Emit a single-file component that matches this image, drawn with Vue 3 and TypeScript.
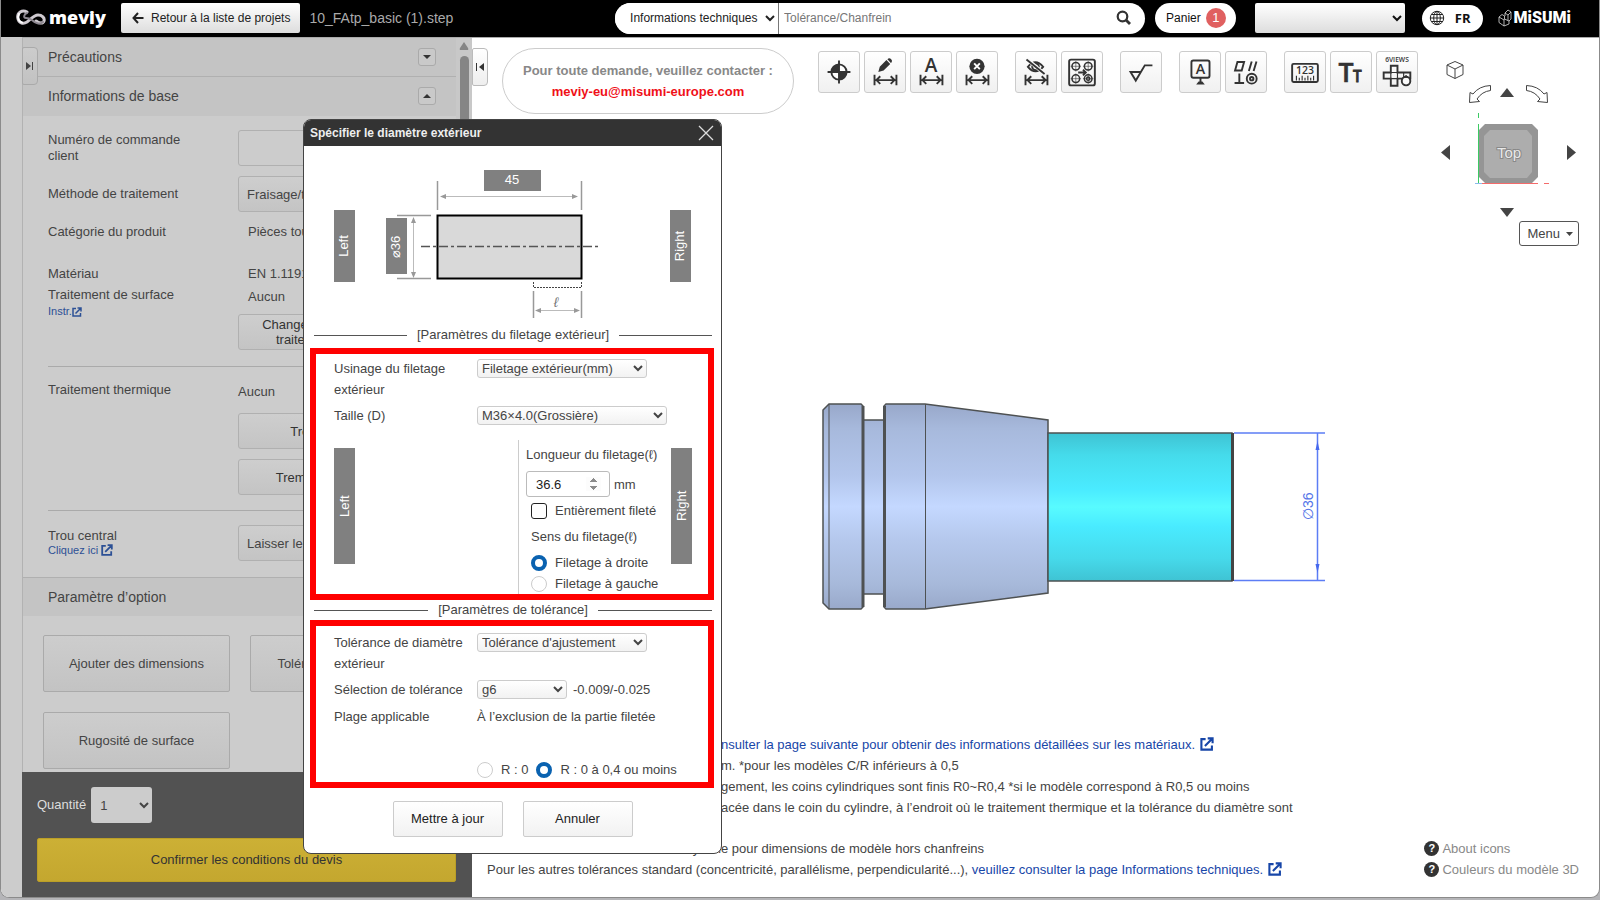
<script setup lang="ts">
import { ref } from 'vue'

const search = ref('')
const threadKind = ref('Filetage extérieur(mm)')
const threadSize = ref('M36×4.0(Grossière)')
const threadLength = ref(36.6)
const fullyThreaded = ref(false)
const direction = ref('right')
const toleranceKind = ref("Tolérance d'ajustement")
const toleranceClass = ref('g6')
const cornerRadius = ref('r04')
const quantity = ref(1)
const options: string[] = ['Ajouter des dimensions', 'Tolérance géométrique', 'Rugosité de surface']
</script>

<template>
  <div class="app">
    <header class="topbar">
      <a class="brand" href="#" aria-label="meviy">
        <svg width="30" height="18" viewBox="0 0 30 18" fill="none" stroke-linecap="round">
          <path d="M11 3C6 0 1 4 1.800 9C2.500 14 7 15.500 11 13C15 10 18 6 22 6C26 6 29 9 28 12C27 15 23 14.500 20 12" stroke="#cfcad0" stroke-width="3" />
          <path d="M11 4C8 5 7 9 10 9C12 9 13 9 16 11C19 14 24 16 27 13" stroke="#8d8790" stroke-width="2" />
          <path d="M3 5C1 9 3 13 6 13.500" stroke="#fff" stroke-width="2" />
        </svg>
        <span>meviy</span>
      </a>
      <button class="back" type="button">
        <svg width="12" height="12" viewBox="0 0 12 12" fill="none" stroke="#222" stroke-width="2"><path d="M6 1L1.500 6L6 11M1.500 6H11.500" /></svg>
        Retour à la liste de projets
      </button>
      <span class="filename">10_FAtp_basic (1).step</span>
      <form class="search" @submit.prevent>
        <select aria-label="Domaine"><option>Informations techniques</option></select>
        <input v-model="search" type="text" aria-label="Recherche" placeholder="Tolérance/Chanfrein" />
        <button type="submit" aria-label="Rechercher">
          <svg width="16" height="16" viewBox="0 0 16 16" fill="none" stroke="#333"><circle cx="6.500" cy="6.500" r="4.800" stroke-width="2.200" /><path d="M10 10L14 14" stroke-width="2.800" /></svg>
        </button>
      </form>
      <button class="cart" type="button">Panier <b>1</b></button>
      <select class="account" aria-label="Compte"><option></option></select>
      <button class="lang" type="button">
        <svg width="16" height="16" viewBox="0 0 16 16" fill="none" stroke="#222"><circle cx="8" cy="8" r="6.700" /><ellipse cx="8" cy="8" rx="3.300" ry="6.700" /><path d="M8 1V15M1 8H15M2.500 4.500H13.500M2.500 11.500H13.500" /></svg>
        FR
      </button>
      <a class="misumi" href="#">
        <svg width="14" height="18" viewBox="0 0 14 18" fill="none" stroke="#ddd" stroke-width=".8"><path d="M1 8L4 5.500L6.500 7V10L11 12V15L6 17L1 13.500ZM1 8L6 11L6.500 10M6 11V17M7 4L10 1L13 3V10L11 12M7 4L10 6L13 3M10 6V11.500M7 4V7" /></svg>
        <span>MiSUMi</span>
      </a>
    </header>

    <main class="workspace">
      <aside class="sidebar">
        <div class="scroller">
          <button class="tab" type="button" aria-label="Déplier le panneau">
            <svg width="8" height="10" viewBox="0 0 8 10"><path d="M0 1L5 5L0 9ZM6 1H7V9H6Z" fill="#444" /></svg>
          </button>
          <div class="content">
            <h2 class="section">Précautions
              <button type="button" aria-label="Ouvrir"><svg width="8" height="4" viewBox="0 0 8 4"><path d="M0 0H8L4 4Z" fill="#333" /></svg></button>
            </h2>
            <h2 class="section base">Informations de base
              <button type="button" aria-label="Fermer"><svg width="8" height="4" viewBox="0 0 8 4"><path d="M0 4H8L4 0Z" fill="#333" /></svg></button>
            </h2>
            <div class="fields">
              <label class="field tall" for="order"><span>Numéro de commande client</span><input id="order" class="control" type="text" /></label>
              <label class="field tall"><span>Méthode de traitement</span><select class="control"><option>Fraisage/tournage</option></select></label>
              <div class="field"><span>Catégorie du produit</span><span class="value">Pièces tournées</span></div>
              <div class="field material"><span>Matériau</span><span class="value">EN 1.1191 (C45E)</span></div>
              <div class="field surface">
                <span>Traitement de surface<br />
                  <a href="#">Instr.<svg class="ext" width="10" height="10" viewBox="0 0 10 10"><path d="M4 1.500H1V9H8.500V6M3.500 6.500L8.500 1.500M5.500 1H9V4.500" /></svg></a>
                </span>
                <span><span class="value">Aucun</span><button class="control" type="button">Changer le matériau ou le<br />traitement de surface</button></span>
              </div>
            </div>
            <div class="fields ruled thermal">
              <div class="field"><span>Traitement thermique</span>
                <span class="stack"><span>Aucun</span><button class="control" type="button">Trempe partielle</button><button class="control" type="button">Trempe par induction</button></span>
              </div>
            </div>
            <div class="fields ruled center-hole">
              <label class="field"><span>Trou central<br /><a href="#">Cliquez ici <svg class="ext" width="12" height="12" viewBox="0 0 10 10"><path d="M4 1.500H1V9H8.500V6M3.500 6.500L8.500 1.500M5.500 1H9V4.500" /></svg></a></span>
                <select class="control"><option>Laisser le centrage</option></select></label>
            </div>
            <h2 class="section option">Paramètre d’option</h2>
            <div class="options"><button v-for="o in options" :key="o" type="button">{{ o }}</button></div>
          </div>
          <div class="scrollbar">
            <svg width="10" height="8" viewBox="0 0 10 8"><path d="M5 0L9 6Q10 8 8 8H2Q0 8 1 6Z" fill="#858585" /></svg>
            <i></i>
          </div>
        </div>
        <div class="order">
          <label>Quantité <select v-model="quantity"><option :value="1">1</option><option :value="2">2</option></select></label>
          <button type="button">Confirmer les conditions du devis</button>
        </div>
      </aside>

      <section class="viewer">
        <div class="viewer-top">
          <button class="tab light" type="button" aria-label="Replier le panneau">
            <svg width="8" height="10" viewBox="0 0 8 10"><path d="M8 1L3 5L8 9ZM0 1H1V9H0Z" fill="#333" /></svg>
          </button>
          <p class="contact">Pour toute demande, veuillez contacter :<a href="#">meviy-eu@misumi-europe.com</a></p>
          <div class="toolbar">
            <div class="group">
              <button type="button" aria-label="Origine"><svg viewBox="0 0 42 42"><circle cx="21" cy="21" r="8" fill="#fff" stroke="#333" stroke-width="2" /><path d="M21 21H13A8 8 0 0 1 21 13ZM21 21H29A8 8 0 0 1 21 29Z" fill="#333" /><path d="M21 9V33M9 21H33" class="s" /></svg></button>
              <button type="button" aria-label="Modifier la cote"><svg viewBox="0 0 42 42"><path d="M14 21L15.500 15.500L22.500 8.500L26.500 12.500L19.500 19.500ZM23.500 7.500L24.500 6.700Q26 6 27.500 7.500T28 10.800L27.200 11.600Z" fill="#333" /><path class="s" d="M10 24V35M33 24V35M11 29.500H32M16 25.500L12 29.500L16 33.500M27 25.500L31 29.500L27 33.500" /></svg></button>
              <button type="button" aria-label="Texte de cote"><svg viewBox="0 0 42 42"><text x="21" y="21" font-size="20" text-anchor="middle">A</text><path class="s" d="M10 24V35M33 24V35M11 29.500H32M16 25.500L12 29.500L16 33.500M27 25.500L31 29.500L27 33.500" /></svg></button>
              <button type="button" aria-label="Supprimer la cote"><svg viewBox="0 0 42 42"><circle cx="21" cy="15" r="8" fill="#333" /><path d="M18 12L24 18M24 12L18 18" stroke="#fff" stroke-width="2" /><path class="s" d="M10 24V35M33 24V35M11 29.500H32M16 25.500L12 29.500L16 33.500M27 25.500L31 29.500L27 33.500" /></svg></button>
            </div>
            <div class="group">
              <button type="button" aria-label="Masquer les cotes"><svg viewBox="0 0 42 42"><path class="s" d="M12.500 15.500Q20.500 6 28.500 15.500Q20.500 25 12.500 15.500Z" /><circle cx="20.500" cy="15.500" r="3.500" class="s" /><path d="M12 8L30 23" stroke="#fafafa" stroke-width="4" /><path d="M11 8L30 23" class="s" /><path class="s" d="M10 24V35M33 24V35M11 29.500H32M16 25.500L12 29.500L16 33.500M27 25.500L31 29.500L27 33.500" /></svg></button>
              <button type="button" aria-label="Copier les trous"><svg viewBox="0 0 42 42"><rect x="7.500" y="8" width="27" height="27" rx="2" class="s" /><g class="ring"><circle cx="14.500" cy="15" r="4" /><circle cx="27.500" cy="15" r="4" /><circle cx="14.500" cy="28" r="4" /><circle cx="27.500" cy="28" r="4" /><circle cx="27.500" cy="28" r="1.700" /><path d="M9 15H20M14.500 9.500V20.500M22 15H33M27.500 9.500V20.500M9 28H20M14.500 22.500V33.500M22 28H33M27.500 22.500V33.500" stroke-width=".6" /></g><path d="M17 21.500H25M22 18.500L25 21.500L22 24.500" class="s" /></svg></button>
            </div>
            <div class="group"><button type="button" aria-label="Rugosité"><svg viewBox="0 0 42 42"><path class="s" d="M21 21H10L15.500 30L25 14H33" /></svg></button></div>
            <div class="group">
              <button type="button" aria-label="Référence"><svg viewBox="0 0 42 42"><rect x="12" y="9" width="19" height="18" rx="2" class="s" /><text x="21.500" y="23.500" font-size="15" text-anchor="middle">A</text><path d="M21.500 27V32" class="s" /><path d="M17 34L19.500 31H23.500L26 34Z" fill="#333" /></svg></button>
              <button type="button" aria-label="Tolérance géométrique"><svg viewBox="0 0 42 42"><path class="s" d="M9.500 19.500L12 10.500H19L16.500 19.500ZM24 20L27 10M29 20L32 10M9 32.500H19M14 22.500V32.500" /><circle cx="27" cy="28" r="5.200" class="s" /><circle cx="27" cy="28" r="1.800" class="s" /></svg></button>
            </div>
            <div class="group">
              <button type="button" aria-label="Mesurer"><svg viewBox="0 0 42 42"><rect x="7.500" y="12.500" width="27" height="19" rx="1.500" class="s" /><text x="21" y="23.500" font-size="11" font-weight="700" text-anchor="middle">123</text><path class="thin" d="M12 25V30M15 27V30M18 25V30M21 27V30M24 25V30M27 27V30M30 25V30" /></svg></button>
              <button type="button" aria-label="Taille du texte"><svg viewBox="0 0 42 42"><text x="8" y="31" font-size="28" stroke="#333" stroke-width=".6">T</text><text x="23" y="31" font-size="16" stroke="#333" stroke-width=".8">T</text></svg></button>
              <button type="button" aria-label="Six vues"><svg viewBox="0 0 42 42"><text x="21" y="11" font-size="7" font-weight="700" text-anchor="middle">6VIEWS</text><path class="s" d="M14.500 14.500H21.500V21.500H35V28H21.500V35.500H14.500V28H7V21.500H14.500Z" /><path class="thin" d="M14.500 21.500H21.500V28H14.500ZM28 21.500V28" /><circle cx="30.500" cy="30.500" r="4.500" fill="#fafafa" stroke="#333" stroke-width="2" /><path d="M28.500 26.500L30.500 24.500L32.500 26.500Z" fill="#333" stroke="#333" /></svg></button>
            </div>
          </div>
        </div>

        <div class="view-control">
          <button class="home" type="button" aria-label="Vue isométrique"><svg width="18" height="20" viewBox="0 0 18 20" fill="none" stroke="#444"><path d="M9 1.500L17 5V14.500L9 18.500L1 14.500V5ZM1 5L9 9L17 5M9 9V18.500" /></svg></button>
          <button class="turn-left" type="button" aria-label="Pivoter à gauche"><svg width="24" height="20" viewBox="0 0 24 20" fill="none" stroke="#444"><path d="M22.500 1.500Q11 2 5 10L2 8.500L1.500 18.500L11.500 17.500L9 15Q14 7.500 22.500 6.500Z" /></svg></button>
          <button class="up" type="button" aria-label="Haut"><svg width="14" height="9" viewBox="0 0 14 9"><path d="M0 9L7 0L14 9Z" /></svg></button>
          <button class="turn-right" type="button" aria-label="Pivoter à droite"><svg width="24" height="20" viewBox="0 0 24 20" fill="none" stroke="#444"><path d="M1.500 1.500Q13 2 19 10L22 8.500L22.500 18.500L12.500 17.500L15 15Q10 7.500 1.500 6.500Z" /></svg></button>
          <button class="west" type="button" aria-label="Gauche"><svg width="9" height="15" viewBox="0 0 9 15"><path d="M9 0L0 7.500L9 15Z" /></svg></button>
          <svg class="cube" width="76" height="74" viewBox="0 0 76 74">
            <path d="M4 18L10 12H57L63 18V65L57 71H10L4 65Z" fill="#959595" />
            <path d="M15 18H52L57 24V60L52 66H15L9 60V24Z" fill="#adadad" />
            <path d="M3.500 1V6M3.500 12V71" stroke="#3ccb63" />
            <path d="M7 71.500H63M69 71.500H74" stroke="#f46b6b" /><path d="M0 71.500H7" stroke="#8cbcec" />
            <text x="34" y="46" text-anchor="middle">Top</text>
          </svg>
          <button class="east" type="button" aria-label="Droite"><svg width="9" height="15" viewBox="0 0 9 15"><path d="M0 0L9 7.500L0 15Z" /></svg></button>
          <button class="down" type="button" aria-label="Bas"><svg width="14" height="9" viewBox="0 0 14 9"><path d="M0 0H14L7 9Z" /></svg></button>
          <button class="menu" type="button">Menu <svg width="7" height="4" viewBox="0 0 7 4"><path d="M0 0H7L3.500 4Z" /></svg></button>
        </div>

        <svg class="model" width="510" height="210" viewBox="820 402 510 210">
          <defs>
            <linearGradient id="steel" gradientUnits="userSpaceOnUse" x1="0" y1="404" x2="0" y2="609"><stop offset="0" stop-color="#98a8ca" /><stop offset=".12" stop-color="#a7b9dc" /><stop offset=".35" stop-color="#b3c6ec" /><stop offset=".5" stop-color="#c4d8ff" /><stop offset=".65" stop-color="#b6c9ee" /><stop offset=".88" stop-color="#a7b9da" /><stop offset="1" stop-color="#99a9ca" /></linearGradient>
            <linearGradient id="cyan" x1="0" y1="0" x2="0" y2="1"><stop offset="0" stop-color="#3fc3d3" /><stop offset=".15" stop-color="#45dbeb" /><stop offset=".38" stop-color="#4aebff" /><stop offset=".5" stop-color="#58fbff" /><stop offset=".63" stop-color="#49ebff" /><stop offset=".85" stop-color="#46d9ea" /><stop offset="1" stop-color="#3fc3d3" /></linearGradient>
          </defs>
          <g fill="url(#steel)" stroke="#4e5152" stroke-width="1.500">
            <path d="M823 410L829 404H861L863 406V607L861 609H829L823 603Z" />
            <path d="M863 420H884V594H863Z" />
            <path d="M886 404H925L1048 420V593L925 609H886L884 607V406Z" />
          </g>
          <path d="M863 406V607M884.500 406V607" stroke="#4e5152" stroke-width="3" />
          <path d="M829 404V609M925.500 404V609" stroke="#4e5152" />
          <rect x="1048" y="433" width="184" height="148" fill="url(#cyan)" stroke="#4e5152" stroke-width="1.500" />
          <path d="M1232.500 433V581" stroke="#444" stroke-width="3" />
          <path d="M1234 433H1325M1234 580.500H1325M1317.500 433V580" stroke="#5c7df5" stroke-width="1.500" />
          <path d="M1317.500 441L1319.500 450H1315.500ZM1317.500 573L1319.500 564H1315.500Z" fill="#4769ee" />
          <text transform="translate(1313 520) rotate(-90)" fill="#5575e8" font-size="14">∅36</text>
        </svg>

        <footer class="viewer-foot">
          <div class="notes">
            <p><a href="#"><span class="lead">Pour les nuances, veuillez co</span>nsulter la page suivante pour obtenir des informations détaillées sur les matériaux. <svg class="ext" width="14" height="14" viewBox="0 0 10 10"><path d="M4 1.500H1V9H8.500V6M3.500 6.500L8.500 1.500M5.500 1H9V4.500" /></svg></a></p>
            <p><span class="lead">Chanfrein des arêtes : 0,1 à 0,5 m</span>m. *pour les modèles C/R inférieurs à 0,5</p>
            <p><span class="lead">Pour les coins sans déga</span>gement, les coins cylindriques sont finis R0~R0,4 *si le modèle correspond à R0,5 ou moins</p>
            <p><span class="lead">Une gorge peut être pl</span>acée dans le coin du cylindre, à l’endroit où le traitement thermique et la tolérance du diamètre sont</p>
            <p class="tail">spécifiés.</p>
            <p><span class="lead">Tolérance ISO 2768 moyenn</span>e pour dimensions de modèle hors chanfreins</p>
            <p>Pour les autres tolérances standard (concentricité, parallélisme, perpendicularité...), <a href="#">veuillez consulter la page Informations techniques. <svg class="ext" width="14" height="14" viewBox="0 0 10 10"><path d="M4 1.500H1V9H8.500V6M3.500 6.500L8.500 1.500M5.500 1H9V4.500" /></svg></a></p>
          </div>
          <nav class="help"><a href="#"><b>?</b>About icons</a><a href="#"><b>?</b>Couleurs du modèle 3D</a></nav>
        </footer>
      </section>
    </main>

    <form class="dialog" role="dialog" aria-labelledby="dialog-title" @submit.prevent>
      <div class="dialog-head"><h1 id="dialog-title">Spécifier le diamètre extérieur</h1>
        <button type="button" aria-label="Fermer"><svg width="16" height="16" viewBox="0 0 16 16" stroke="#ddd" stroke-width="1.300"><path d="M1 1L15 15M15 1L1 15" /></svg></button>
      </div>
      <svg class="diagram" viewBox="304 146 417 179">
        <g fill="#808080"><rect x="484" y="170" width="57" height="21" /><rect x="334" y="210" width="21" height="72" /><rect x="386" y="218" width="21" height="56" /><rect x="670" y="210" width="21" height="72" /></g>
        <rect x="437.500" y="215.500" width="144" height="63" fill="#d9d9d9" stroke="#000" stroke-width="2" />
        <path d="M421 246.500H599" stroke="#555" stroke-width="1.500" stroke-dasharray="9 3 3 3" />
        <path d="M437.500 181V210M581.500 181V210M397 215.500H431M397 278.500H431M533.500 291V318M581.500 291V318" stroke="#999" stroke-width="1.500" />
        <path d="M442 196.500H577M413.500 219V276M537 310.500H578" stroke="#bbb" />
        <path d="M440 196.500L446 194V199ZM578 196.500L572 194V199ZM413.500 217L411 223H416ZM413.500 278L411 272H416ZM535 310.500L541 308V313ZM580 310.500L574 308V313Z" fill="#999" />
        <path d="M533.500 282V287.500H581.500V282" fill="none" stroke="#444" stroke-dasharray="2 1" />
        <text class="light" x="512" y="184" text-anchor="middle">45</text>
        <text class="light" transform="translate(348 246) rotate(-90)" text-anchor="middle">Left</text>
        <text class="light" transform="translate(400 247) rotate(-90)" text-anchor="middle">⌀36</text>
        <text class="light" transform="translate(684 246) rotate(-90)" text-anchor="middle">Right</text>
        <text x="556" y="307" text-anchor="middle" fill="#777" font-size="14" font-style="italic">ℓ</text>
      </svg>
      <h2 class="divider first">[Paramètres du filetage extérieur]</h2>
      <div class="red thread">
        <div class="row"><label for="kind">Usinage du filetage extérieur</label><select id="kind" v-model="threadKind" class="wide"><option>Filetage extérieur(mm)</option></select></div>
        <div class="row"><label for="size">Taille (D)</label><select id="size" v-model="threadSize" class="wider"><option>M36×4.0(Grossière)</option></select></div>
        <div class="sides">
          <span class="side">Left</span>
          <div class="ends">
            <label for="length">Longueur du filetage(ℓ)</label>
            <div class="length"><input id="length" v-model="threadLength" type="number" step="0.1" /> mm</div>
            <label class="pick"><input v-model="fullyThreaded" type="checkbox" />Entièrement fileté</label>
            <span class="sense">Sens du filetage(ℓ)</span>
            <label class="pick"><input v-model="direction" type="radio" name="direction" value="right" />Filetage à droite</label>
            <label class="pick"><input v-model="direction" type="radio" name="direction" value="left" />Filetage à gauche</label>
          </div>
          <span class="side">Right</span>
        </div>
      </div>
      <h2 class="divider">[Paramètres de tolérance]</h2>
      <div class="red tolerance">
        <div class="row"><label for="tol">Tolérance de diamètre extérieur</label><select id="tol" v-model="toleranceKind" class="wide"><option>Tolérance d'ajustement</option></select></div>
        <div class="row"><label for="grade">Sélection de tolérance</label><select id="grade" v-model="toleranceClass" class="short"><option>g6</option></select><span>-0.009/-0.025</span></div>
        <div class="row"><span class="name">Plage applicable</span><span>À l’exclusion de la partie filetée</span></div>
        <div class="radii">
          <label class="pick"><input v-model="cornerRadius" type="radio" name="radius" value="r0" />R : 0</label>
          <label class="pick"><input v-model="cornerRadius" type="radio" name="radius" value="r04" />R : 0 à 0,4 ou moins</label>
        </div>
      </div>
      <div class="actions"><button type="submit">Mettre à jour</button><button type="button">Annuler</button></div>
    </form>
  </div>
</template>

<style>
body { background: #b5b5b8; }
</style>

<style scoped>
.app, .app * { box-sizing: border-box; }
.app { position: relative; display: flex; flex-direction: column; height: calc(100vh - 2px); min-height: 880px; border: 1px solid #8b8b8b; border-top: 0; border-radius: 0 0 9px 9px; overflow: hidden; background: #fff; color: #444; font: 13px/16px "Liberation Sans", Arial, sans-serif; }
button, input, select { font: inherit; color: inherit; margin: 0; }
button { padding: 0; border: 0; background: none; }
a { color: #1746a8; text-decoration: none; }
h1, h2, p { margin: 0; font: inherit; }
svg { display: block; flex: none; }
.ext { display: inline-block; vertical-align: -2px; fill: none; stroke: currentColor; stroke-width: 1.5; }

.topbar { display: flex; align-items: center; flex: none; height: 37px; padding-bottom: 1px; background: #000; color: #fff; font-size: 12px; }
.brand { display: flex; align-items: center; gap: 3px; width: 105px; margin-left: 15px; color: #fff; font: 800 18px/30px "Open Sans", sans-serif; }
.brand span { margin-top: -3px; }
.back { display: flex; align-items: center; gap: 7px; height: 30px; padding: 0 10px 0 11px; border-radius: 2px; background: linear-gradient(#fff, #ddd); color: #222; }
.filename { margin-left: 9px; color: #aaa; font-size: 14px; }
.search { display: flex; flex: 1; max-width: 530px; height: 31px; margin-left: auto; border-radius: 16px; background: #fff; color: #222; overflow: hidden; }
.search select { width: 164px; padding: 0 0 0 11px; border: 0; border-right: 1px solid #777; background: #fff; }
.search input { flex: 1; padding: 0 5px; border: 0; outline: 0; }
.search input::placeholder { color: #777; }
.search button { width: 29px; }
.cart { display: flex; align-items: center; gap: 5px; height: 30px; margin-left: 10px; padding: 0 10px 0 11px; border-radius: 15px; background: #fff; color: #111; }
.cart b { width: 20px; height: 20px; border-radius: 50%; background: #e06060; color: #fff; font: 13px/20px "Liberation Sans", sans-serif; }
.account { width: 150px; height: 30px; margin-left: 19px; border: 0; border-radius: 2px; background: linear-gradient(#fff, #ddd); color: #111; }
.lang { display: flex; align-items: center; gap: 10px; height: 27px; margin-left: 17px; padding: 0 12px 0 7px; border-radius: 14px; background: #fff; color: #111; font: 700 13px/27px "Open Sans", sans-serif; }
.misumi { display: flex; align-items: center; gap: 2px; margin: 0 28px 0 15px; color: #fff; font: 900 16px/18px Roboto, sans-serif; }

.workspace { display: flex; flex: 1; min-height: 0; }
.sidebar { display: flex; flex-direction: column; flex: none; width: 471px; padding-left: 21px; background: #ccc; }
.scroller { position: relative; display: flex; flex: 1; min-height: 0; border-left: 1px solid #b2b2b2; border-top: 1px solid #aaa; }
.content { flex: 1; overflow: hidden; }
.tab { position: absolute; left: -1px; top: 9px; display: flex; align-items: center; justify-content: center; width: 16px; height: 38px; border: 1px solid #aaa; border-radius: 2px 4px 4px 2px; background: linear-gradient(#ccc, #c2c2c2); }
.tab.light { left: 0; top: 10px; border-color: #bbb; background: linear-gradient(#fff, #eee); }
.section { display: flex; align-items: center; justify-content: space-between; height: 39px; padding: 0 20px 0 25px; border-bottom: 1px solid #b0b0b0; background: #c4c4c4; font-size: 14px; }
.section.base { border-bottom-color: #c4c4c4; }
.section.option { margin-top: 16px; border-top: 1px solid #b0b0b0; border-bottom: 0; }
.section button { display: flex; align-items: center; justify-content: center; width: 18px; height: 18px; border: 1px solid #aaa; border-radius: 3px; background: #c9c9c9; }
.fields { margin: 0 20px 0 25px; padding-top: 14px; }
.fields.ruled { border-top: 1px solid #aaa; }
.field { display: grid; grid-template-columns: 190px 1fr; align-items: center; min-height: 20px; }
.field > span:first-child { padding-right: 50px; }
.field.tall { margin-bottom: 10px; }
.value { padding-left: 10px; }
.field.material { margin-top: 22px; }
.field.surface { align-items: start; }
.field.surface > span { padding: 3px 0; }
.field.surface .value { display: block; margin: 2px 0 9px; }
.field a { font-size: 11px; color: #2c5095; }
.field.surface > span:first-child, .thermal .field > span:first-child { padding-right: 0; }
.control { width: 100%; height: 36px; padding: 0 4px; border: 1px solid #b0b0b0; border-radius: 3px; background: linear-gradient(#cecece, #c4c4c4); }
input.control { background: #ccc; }
button.control { display: block; color: #333; line-height: 15px; }
.thermal { margin-top: 13px; }
.thermal .field, .center-hole .field { align-items: start; }
.stack { display: grid; gap: 10px; padding-top: 2px; }
.thermal.fields { padding-top: 15px; }
.stack > span { line-height: 15px; margin-bottom: 4px; }
.center-hole { margin-top: 15px; }
.center-hole .field > span:first-child { line-height: 14px; padding: 4px 0 0; }
.options { display: grid; grid-template-columns: 187px 187px; gap: 20px; padding: 19px 20px 0 20px; }
.options button { height: 57px; border: 1px solid #aaa; border-radius: 2px; background: linear-gradient(#cdcdcd, #c3c3c3); }
.scrollbar { display: flex; flex-direction: column; align-items: center; gap: 6px; width: 16px; padding-top: 4px; background: #c8c8c8; }
.scrollbar i { width: 9px; height: 520px; border-radius: 5px; background: #858585; }
.order { flex: none; display: grid; gap: 15px; padding: 15px 16px 15px 15px; background: #525252; color: #ddd; }
.order label { display: flex; align-items: center; gap: 5px; }
.order select { width: 61px; height: 36px; padding: 0 4px 0 5px; border: 0; border-radius: 3px; background: #ccc; color: #444; }
.order button { height: 44px; border: 1px solid #bb9f27; border-radius: 2px; background: linear-gradient(#ccb035, #c4a72f); color: #333; }

.viewer { position: relative; display: flex; flex-direction: column; flex: 1; min-width: 0; border-top: 1px solid #aaa; }
.viewer-top { display: flex; align-items: start; gap: 24px; padding: 10px 0 0 30px; }
.contact { padding: 11px 20px; border: 1px solid #ccc; border-radius: 33px; color: #888; font-weight: 700; line-height: 21px; text-align: center; }
.contact a { display: block; color: #f01018; }
.toolbar { display: flex; gap: 17px; padding-top: 3px; }
.group { display: flex; gap: 4px; }
.group button { width: 42px; height: 42px; border: 1px solid #ccc; border-radius: 3px; background: linear-gradient(#fff, #f0f0f0); }
.group svg { width: 40px; height: 40px; }
.group text { fill: #333; font-family: "Open Sans", sans-serif; font-weight: 600; }
.s { fill: none; stroke: #333; stroke-width: 2; }
.thin { fill: none; stroke: #333; stroke-width: 1.2; }
.ring { fill: none; stroke: #333; stroke-width: 1.6; }
.view-control { position: absolute; right: 20px; top: 22px; display: grid; grid-template-columns: 27px 32px 14px 35px 30px; grid-template-rows: 24px 28px 74px 31px 4px 25px; justify-items: center; align-items: center; width: 138px; fill: #444; }
.home { grid-area: 1 / 1; align-self: start; justify-self: start; margin-left: 5px; }
.turn-left { grid-area: 2 / 2; align-self: start; justify-self: start; }
.up { grid-area: 2 / 3; align-self: start; margin-top: 4px; }
.turn-right { grid-area: 2 / 4; align-self: start; justify-self: end; }
.west { grid-area: 3 / 1; justify-self: start; margin-top: 6px; }
.cube { grid-area: 3 / 2 / 4 / 5; justify-self: start; margin-left: 7px; }
.cube text { fill: #e8e8e8; stroke: #888; stroke-width: 2; paint-order: stroke; font-size: 15px; }
.east { grid-area: 3 / 5; justify-self: end; margin: 6px 3px 0 0; }
.down { grid-area: 4 / 3; align-self: end; }
.menu { grid-area: 6 / 3 / 7 / 6; justify-self: end; display: flex; align-items: center; gap: 6px; height: 25px; padding: 0 5px 0 7px; border: 1px solid #555; border-radius: 3px; background: #fff; white-space: nowrap; }
.model { margin: auto auto 0 348px; }
.viewer-foot { display: flex; justify-content: space-between; align-items: end; margin-top: 122px; padding: 0 20px 17px 15px; line-height: 21px; }
.notes { white-space: nowrap; }
.notes .tail { height: 20px; }
.notes a { color: #1746a8; }
.notes .ext { margin-left: 1px; }
.lead { display: inline-block; width: 234px; text-align: right; }
.help a { display: flex; align-items: center; gap: 3px; color: #888; }
.help b { width: 15px; height: 15px; border-radius: 50%; background: #333; color: #fff; font-size: 11px; line-height: 15px; text-align: center; }

.dialog { position: absolute; left: 302px; top: 119px; width: 419px; border: 1px solid #444; border-radius: 8px; background: #fff; overflow: hidden; }
.dialog-head { display: flex; align-items: center; justify-content: space-between; height: 26px; padding: 0 7px 1px 6px; background: #333; color: #eee; }
.dialog-head h1 { font-weight: 700; font-size: 12px; }
.diagram { width: 417px; height: 179px; font-size: 13px; }
.diagram .light { fill: #fff; }
.divider { display: flex; align-items: center; gap: 10px; height: 20px; padding: 0 9px 0 10px; }
.divider.first { margin-bottom: 3px; }
.divider::before, .divider::after { content: ""; flex: 1; border-top: 1px solid #555; }
.red { width: 404px; margin-left: 6px; padding: 4px 16px 0 18px; border: 6px solid #f00; line-height: 21px; }
.row { display: flex; gap: 6px; margin-bottom: 5px; }
.row label, .row .name { width: 137px; }
.row select { height: 19px; margin-top: 1px; padding: 0; border: 1px solid #ccc; border-radius: 3px; background: linear-gradient(#fff, #f2f2f2); line-height: 17px; }
.wide { width: 170px; }
.wider { width: 190px; }
.short { width: 90px; }
.sides { display: flex; align-items: start; height: 154px; margin-top: 14px; }
.side { display: flex; flex: none; align-items: center; justify-content: center; width: 21px; height: 116px; margin-top: 8px; background: #808080; color: #fff; writing-mode: vertical-rl; transform: rotate(180deg); }
.ends { display: flex; flex-direction: column; width: 153px; height: 154px; margin-left: auto; padding: 4px 0 0 7px; border-left: 1px solid #ccc; white-space: nowrap; }
.length { display: flex; align-items: center; gap: 4px; height: 26px; margin: 6px 0 3px; }
.length input { width: 84px; height: 26px; padding: 0 8px 0 9px; border: 1px solid #bbb; border-radius: 3px; color: #222; }
.length input::-webkit-inner-spin-button { opacity: 1; }
.pick { display: flex; align-items: center; gap: 8px; height: 21px; }
.ends .pick { margin-left: 5px; }
.sense { margin: 5px 0 5px 5px; }
.pick input { appearance: none; flex: none; width: 16px; height: 16px; border: 1px solid #ccc; border-radius: 50%; background: #fff; }
.pick input[type="checkbox"] { border: 1px solid #222; border-radius: 3px; }
.pick input[type="radio"]:checked { border: 4px solid #0a62b0; }
.tolerance { height: 168px; padding-top: 6px; }
.tolerance .row:nth-child(3) { margin-top: 6px; margin-bottom: 32px; }
.radii { display: flex; gap: 8px; margin-left: 143px; }
.actions { display: flex; justify-content: center; gap: 20px; padding: 13px 0 16px; }
.actions button { width: 110px; height: 36px; border: 1px solid #ccc; border-radius: 2px; background: linear-gradient(#fff, #f2f2f2); color: #222; }
</style>
